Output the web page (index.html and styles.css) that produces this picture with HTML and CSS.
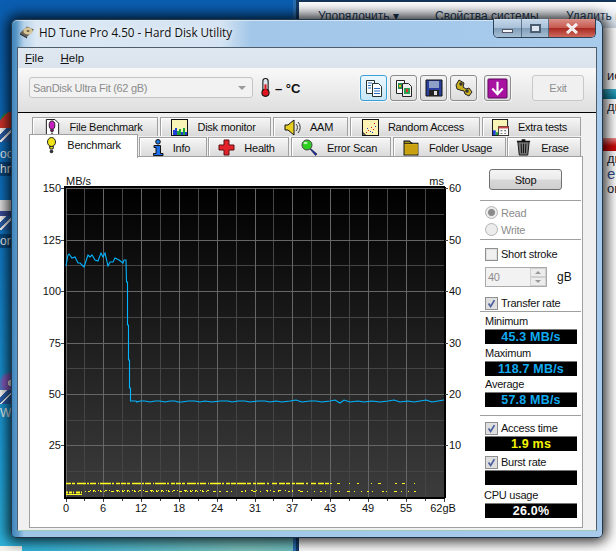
FILE: index.html
```html
<!DOCTYPE html>
<html lang="en">
<head>
<meta charset="utf-8">
<title>HD Tune Pro 4.50 - Hard Disk Utility</title>
<link rel="stylesheet" href="styles.css">
</head>
<body>
<div class="desk">
  <div class="shortcut s1"><span class="chrome"></span><span class="arrow"></span><span class="dlabel l1">oo</span><span class="dlabel dark l2">hr</span></div>
  <div class="shortcut s2"><span class="doc"></span><span class="arrow"></span><span class="dlabel dark l3">or</span></div>
  <div class="shortcut s3"><span class="purple"></span><span class="arrow"></span><span class="dlabel l4">Wil</span></div>
  <div class="corner"></div>

  <div class="explorer">
    <div class="exp-bar"><span class="e1">Упорядочить ▾</span><span class="e2">Свойства системы</span><span class="e3">Удалить и</span></div>
    <div class="exp-side">
      <p class="row-a">ис</p>
      <div class="bar teal"></div>
      <p class="row-b">дн</p>
      <div class="bar red"></div>
      <p class="row-c">дн</p>
      <p class="row-d">еМ</p>
      <p class="row-e">ов</p>
    </div>
  </div>

  <div class="win">
    <div class="titlebar">
      <svg class="appicon" viewBox="0 0 16 16"><path d="M1 9 8 2.500 15 5.500 8 13z" fill="#6b6255"/><ellipse cx="9" cy="7" rx="4.600" ry="3.600" fill="#d8c79a"/><ellipse cx="9" cy="7" rx="1.500" ry="1.100" fill="#6a5a3c"/><path d="M1 9 8 13 8 14.500 1 10.500z" fill="#2c2c2c"/></svg>
      <span class="title">HD Tune Pro 4.50 - Hard Disk Utility</span>
      <div class="caption">
        <span class="cbtn cmin"><i></i></span><span class="cbtn cmax"><i></i></span><span class="cbtn cclose">
          <svg viewBox="0 0 14 11" width="14" height="11"><path d="M2 1 12 10M12 1 2 10" stroke="#fff" stroke-width="3"/><path d="M2 1 12 10M12 1 2 10" stroke="#57373a" stroke-width=".5" opacity=".4"/></svg>
        </span>
      </div>
    </div>

    <div class="client">
      <div class="menu"><span><u>F</u>ile</span><span><u>H</u>elp</span></div>
      <div class="toolbar">
        <div class="combo"><span>SanDisk Ultra Fit (62 gB)</span><i></i></div>
        <svg class="thermo" viewBox="0 0 10 18"><rect x="2.500" y=".5" width="5" height="12" rx="2.500" fill="#dfe7ee" stroke="#111"/><circle cx="5" cy="14" r="3.400" fill="#e0141c" stroke="#111"/><rect x="4" y="6" width="2" height="7" fill="#e0141c"/></svg>
        <span class="temp">– °C</span>
        <button class="tool on"><svg viewBox="0 0 20 20"><path d="M2.500 2.500h8v13h-8z" fill="#fff" stroke="#233"/><path d="M8.500 5.500h6l3 3v10h-9z" fill="#fff" stroke="#233"/><path d="M4 5h4M4 7.500h3M4 10h3M10 10.500h6M10 13h6M10 15.500h6" stroke="#2a6fc0"/></svg></button>
        <button class="tool t2"><svg viewBox="0 0 20 20"><path d="M2.500 2.500h8v13h-8z" fill="#fff" stroke="#222"/><path d="M8.500 5.500h6l3 3v10h-9z" fill="#eee" stroke="#222"/><rect x="4" y="5" width="4" height="6" fill="#2a8a50"/><rect x="10" y="10" width="6" height="6" fill="#2aa050"/><rect x="12" y="11" width="2" height="3" fill="#e03030"/><rect x="5" y="7" width="2" height="2" fill="#e8c020"/></svg></button>
        <button class="tool t3"><svg viewBox="0 0 20 20"><path d="M2 2h16v16H2z" fill="#2a3f9c" stroke="#111"/><rect x="5" y="3" width="10" height="7" fill="#8fa0c8"/><rect x="5" y="12" width="10" height="6" fill="#222"/><rect x="10" y="13" width="3" height="4" fill="#ddd"/></svg></button>
        <button class="tool t4"><svg viewBox="0 0 20 20"><path d="M5 2l5 3-1 4 3 2 3-1 3 4-3 4-4-2-1-3-4-1-3-1-1-4z" fill="#c8b020" stroke="#222"/><circle cx="7" cy="6" r="1.800" fill="#333"/><circle cx="13" cy="13" r="1.800" fill="#333"/></svg></button>
        <button class="tool t5"><svg viewBox="0 0 22 22"><rect x="1" y="1" width="20" height="20" rx="1" fill="#a712a0" stroke="#5a085a"/><path d="M11 4v12M5.500 11 11 17l5.500-6" stroke="#fff" stroke-width="2.200" fill="none"/></svg></button>
        <button class="exit">Exit</button>
      </div>

      <div class="tabs">
        <div class="tabrow">
          <div class="tab w-fb"><svg viewBox="0 0 16 18" class="ico"><path d="M1.500.5h9l4 4v13h-13z" fill="#fff" stroke="#111"/><ellipse cx="7.500" cy="6.500" rx="3" ry="4.500" fill="#c81fc0" stroke="#222"/><path d="M6 11.500h3l-.5 2h-2z" fill="#c81fc0" stroke="#222"/><circle cx="7.500" cy="15.500" r="1" fill="#555"/></svg>File Benchmark</div>
          <div class="tab w-dm"><svg viewBox="0 0 17 17" class="ico"><rect x=".5" y=".5" width="16" height="16" fill="#f8f4b8" stroke="#111"/><path d="M2 16v-5h2V9h2v5h2v-4h2v3h2v-4h2v4h2v3z" fill="#1e3fd8"/><path d="M6 16v-4h2v-2h2v6zM12 16V9h2v7z" fill="#1da53a"/></svg>Disk monitor</div>
          <div class="tab w-aam"><svg viewBox="0 0 17 17" class="ico"><path d="M1 6h3l6-5v15l-6-5H1z" fill="#e8cf20" stroke="#111"/><path d="M12 5a5 5 0 0 1 0 7M14 3a8 8 0 0 1 0 11" stroke="#333" fill="none"/></svg>AAM</div>
          <div class="tab w-ra"><svg viewBox="0 0 17 17" class="ico"><rect x=".5" y=".5" width="16" height="16" fill="#fbf2b4" stroke="#111"/><path d="M12 4h1v1h-1zM9 8h1v1H9zM6 11h1v1H6zM11 10h1v1h-1zM4 13h1v1H4z" fill="#d01020"/><path d="M13 7h1v1h-1zM8 12h1v1H8zM5 9h1v1H5zM10 13h1v1h-1z" fill="#1a40c0"/><path d="M1 14h1v2h2v1" stroke="#111" fill="none"/></svg>Random Access</div>
          <div class="tab w-et"><svg viewBox="0 0 18 18" class="ico"><rect x=".5" y=".5" width="16" height="17" fill="#f8f4b8" stroke="#111"/><rect x="1" y="12" width="3" height="5" fill="#1e3fd8"/><rect x="4" y="14" width="3" height="3" fill="#1da53a"/><rect x="7" y="8" width="10.500" height="9.500" fill="#fff" stroke="#333"/><path d="M7 8h10.500v2H7z" fill="#c44"/><path d="M9 12h2v1H9zM13 12h2v1h-2zM9 15h2v1H9zM13 15h2v1h-2z" fill="#555"/></svg>Extra tests</div>
        </div>
        <div class="tabrow row2">
          <div class="tab sel w-bm"><svg viewBox="0 0 11 17" class="ico bang"><ellipse cx="5.500" cy="5" rx="4" ry="4.500" fill="#f0e418" stroke="#222"/><path d="M3.500 9.500h4L7 12H4z" fill="#f0e418" stroke="#222"/><circle cx="5.500" cy="14.500" r="1.800" fill="#333"/></svg>Benchmark</div>
          <div class="tab w-in"><svg viewBox="0 0 12 17" class="ico inf"><circle cx="6" cy="2.800" r="2.300" fill="#1f7ae8" stroke="#111"/><path d="M2 6.500h6.500v8H11v2H1.500v-2H4v-6H2z" fill="#1f6fe8" stroke="#111"/></svg>Info</div>
          <div class="tab w-he"><svg viewBox="0 0 17 17" class="ico"><path d="M6 1h5v5h5v5h-5v5H6v-5H1V6h5z" fill="#e4222a" stroke="#5a1010"/></svg>Health</div>
          <div class="tab w-es"><svg viewBox="0 0 17 17" class="ico"><path d="M9 9l7 6-1.500 1.500-6-7z" fill="#1c2fb8" stroke="#111" stroke-width=".6"/><circle cx="6" cy="6" r="5" fill="#2ed01f" stroke="#444"/><ellipse cx="4.500" cy="4" rx="2" ry="1.300" fill="#b8f4b0"/></svg>Error Scan</div>
          <div class="tab w-fu"><svg viewBox="0 0 16 16" class="ico"><path d="M1 4V2h5l2 2h6v11H1z" fill="#e8c820" stroke="#111"/><path d="M2 5h12v9H2z" fill="#c8a010"/><path d="M1 4h8" stroke="#111"/></svg>Folder Usage</div>
          <div class="tab w-er"><svg viewBox="0 0 16 18" class="ico"><path d="M2 3h12l-1.500 14h-9z" fill="#777" stroke="#111"/><path d="M1 2.500h14M6 1h4" stroke="#111" stroke-width="1.500"/><path d="M5.500 5l.5 10M8 5v10M10.500 5 10 15" stroke="#111"/></svg>Erase</div>
        </div>
        <div class="page">
          <svg class="chart" viewBox="30 169 446 351" width="446" height="351">
            <defs><linearGradient id="plotbg" x1="0" y1="0" x2="0" y2="1"><stop offset="0" stop-color="#000"/><stop offset="1" stop-color="#3c3c3c"/></linearGradient></defs>
            <rect x="66" y="188" width="378" height="309" fill="url(#plotbg)"/>
            <path class="minor" d="M84.500 188v309M122.500 188v309M160.500 188v309M198.500 188v309M236.500 188v309M273.500 188v309M311.500 188v309M349.500 188v309M387.500 188v309M425.500 188v309M66 214.500h378M66 265.500h378M66 317.500h378M66 368.500h378M66 420.500h378M66 471.500h378"/>
            <path class="major" d="M66.500 188v309M103.500 188v309M141.500 188v309M179.500 188v309M217.500 188v309M255.500 188v309M292.500 188v309M330.500 188v309M368.500 188v309M406.500 188v309M66 188.500h378M66 240.500h378M66 291.500h378M66 343.500h378M66 394.500h378M66 445.500h378"/>
            <path class="frame" d="M65 187v311h380M64 187h381M445 187v311" />
            <path class="tick" d="M61 188.500h3M61 240.500h3M61 291.500h3M61 343.500h3M61 394.500h3M61 445.500h3M445 188.500h3M445 240.500h3M445 291.500h3M445 343.500h3M445 394.500h3M445 445.500h3M66.500 499v3M84.500 499v2M103.500 499v3M122.500 499v2M141.500 499v3M160.500 499v2M179.500 499v3M198.500 499v2M217.500 499v3M236.500 499v2M255.500 499v3M273.500 499v2M292.500 499v3M311.500 499v2M330.500 499v3M349.500 499v2M368.500 499v3M387.500 499v2M406.500 499v3M425.500 499v2M444.500 499v3"/>
            <line class="dots d1" x1="66" y1="483.500" x2="240" y2="483.500"/>
            <line class="dots d2" x1="240" y1="483.500" x2="330" y2="483.500"/>
            <line class="dots d3" x1="330" y1="483.500" x2="422" y2="483.500"/>
            <line class="dots d4" x1="85" y1="491.500" x2="220" y2="491.500"/>
            <line class="dots d5" x1="220" y1="491.500" x2="418" y2="491.500"/>
            <line class="dots d6" x1="66" y1="494.500" x2="83" y2="494.500"/>
            <line class="dots d7" x1="66" y1="492.500" x2="82" y2="492.500"/>
            <line class="dots d4" x1="90" y1="490.500" x2="210" y2="490.500"/>
            <line class="dots d5" x1="245" y1="490.500" x2="300" y2="490.500"/>
            <polyline class="trace" points="66,266 68,255 69,254 72,258 75,257 78,263 80,263 84,267 88,255 90,257 92,255 95,260 98,261 101,253 103,257 105,253 108,266 110,262 113,262 115,258 119,260 123,263 124,260 126,260 126.500,282 127.500,282 127.500,325 128.500,325 128.500,360 129.500,360 129.500,388 130.500,388 130.500,401 136,401 137,402 140,401 145,401 150,402 155,401 160,401 165,402 170,401 175,401 178,402 182,402 188,401 195,401 200,402 205,401 212,402 220,401 228,401 232,402 238,401 245,401 250,402 258,401 265,401 270,402 276,401 282,402 290,401 296,400 302,402 310,401 316,401 322,402 330,401 335,400 340,403 344,400 350,402 358,401 364,402 372,401 380,402 388,401 394,400 400,402 408,401 414,402 420,401 426,400 432,402 438,401 444,400"/>
            <g class="lbl end">
              <text x="61" y="192">150</text><text x="61" y="244">125</text><text x="61" y="295">100</text><text x="61" y="347">75</text><text x="61" y="398">50</text><text x="61" y="449">25</text>
            </g>
            <g class="lbl">
              <text x="66" y="185">MB/s</text>
              <text x="449" y="192">60</text><text x="449" y="244">50</text><text x="449" y="295">40</text><text x="449" y="347">30</text><text x="449" y="398">20</text><text x="449" y="449">10</text>
            </g>
            <text class="lbl end" x="444" y="185">ms</text>
            <g class="lbl mid">
              <text x="66" y="512">0</text><text x="103" y="512">6</text><text x="141" y="512">12</text><text x="179" y="512">18</text><text x="217" y="512">24</text><text x="255" y="512">31</text><text x="292" y="512">37</text><text x="330" y="512">43</text><text x="368" y="512">49</text><text x="406" y="512">55</text><text x="443" y="512">62gB</text>
            </g>
          </svg>
          <div class="panel">
            <button class="stop">Stop</button>
            <hr class="sep s-a">
            <label class="opt dim first"><i class="radio on"></i>Read</label>
            <label class="opt dim"><i class="radio"></i>Write</label>
            <hr class="sep s-b">
            <label class="opt short"><i class="check"></i>Short stroke</label>
            <div class="spinrow"><div class="spin"><span>40</span><b><i class="up"></i><i class="down"></i></b></div><span class="unit">gB</span></div>
            <label class="opt tr"><i class="check ticked"><svg viewBox="0 0 13 13"><path d="M3 6.500 5.500 10 10 2.500" stroke="#4b5f9e" stroke-width="2" fill="none"/></svg></i>Transfer rate</label>
            <hr class="sep s-c">
            <div class="cap">Minimum</div><div class="val blue">45.3 MB/s</div>
            <div class="cap c2">Maximum</div><div class="val blue">118.7 MB/s</div>
            <div class="cap c3">Average</div><div class="val blue">57.8 MB/s</div>
            <hr class="sep s-d">
            <label class="opt at"><i class="check ticked"><svg viewBox="0 0 13 13"><path d="M3 6.500 5.500 10 10 2.500" stroke="#4b5f9e" stroke-width="2" fill="none"/></svg></i>Access time</label>
            <div class="val yellow">1.9 ms</div>
            <label class="opt br"><i class="check ticked"><svg viewBox="0 0 13 13"><path d="M3 6.500 5.500 10 10 2.500" stroke="#4b5f9e" stroke-width="2" fill="none"/></svg></i>Burst rate</label>
            <div class="val"></div>
            <div class="cap c4">CPU usage</div><div class="val white">26.0%</div>
          </div>
        </div>
      </div>
    </div>
  </div>
</div>
</body>
</html>
```
FILE: styles.css
```css
* { box-sizing: border-box; }
html, body { margin: 0; padding: 0; }
body { width: 616px; height: 551px; overflow: hidden; font-family: "Liberation Sans", Arial, sans-serif; font-size: 11px; letter-spacing: -.25px; color: #111; }

.desk { position: relative; width: 616px; height: 551px; overflow: hidden;
  background:
    radial-gradient(ellipse 230px 70px at 250px 551px, #7fc4bd 0, rgba(127,196,189,0) 100%),
    linear-gradient(180deg, #0a5db0 0, #0f78c8 40%, #1fa6e0 85%, #2fb4dc 100%); }

.shortcut { position: absolute; left: 0; width: 11px; display: flex; flex-direction: column; overflow: hidden; color: #fff; font-size: 12px; letter-spacing: 0; }
.s1 { top: 112px; }
.s2 { top: 200px; }
.s3 { top: 372px; }
.chrome { display: block; width: 11px; height: 16px; background: linear-gradient(135deg, #2f8a3c 0 30%, #d6352b 30% 100%); border-radius: 10px 0 0 0; }
.doc { display: block; width: 11px; height: 16px; background: linear-gradient(180deg, #e7e7e7 0 70%, #3a4f9c 70%); }
.purple { display: block; width: 11px; height: 18px; background: radial-gradient(circle at 11px 11px, #fff 0 3px, #8a60c8 3px 9px, #5a78c8 9px); border-radius: 10px 0 0 0; }
.arrow { display: block; width: 11px; height: 14px; background: linear-gradient(135deg, #fff 0 28%, #2c62b0 28% 52%, #fff 52% 62%, #2c62b0 62% 100%); }
.dlabel { display: block; height: 14px; line-height: 14px; white-space: nowrap; }
.dlabel.dark { background: rgba(0,20,50,.45); }
.l1 { margin-top: 5px; }
.l2 { margin-top: 1px; }
.l3 { margin-top: 4px; }
.l4 { margin-top: 2px; }
.corner { position: absolute; left: 0; bottom: 0; width: 22px; height: 5px; background: #f4f4ee; }

.explorer { position: absolute; left: 296px; top: 0; width: 320px; height: 551px; background: #fff; border-left: 3px solid #123a66; border-top: 2px solid #14345a; box-shadow: -3px 0 0 #2a6eb0; letter-spacing: 0; }
.exp-bar { position: relative; height: 26px; display: flex; background: linear-gradient(180deg, #fdfeff 0, #f0f4f9 45%, #c9d4e0 100%); color: #1e395b; font-size: 12px; padding-top: 7px; }
.e1, .e2, .e3 { position: absolute; top: 7px; white-space: nowrap; }
.e1 { left: 19px; }
.e2 { left: 136px; }
.e3 { left: 267px; white-space: nowrap; }
.exp-side { margin-left: 308px; padding-top: 40px; white-space: nowrap; color: #223; font-size: 13px; }
.exp-side p { margin: 0; height: 15px; line-height: 15px; }
.bar { margin-left: -10px; width: 30px; }
.teal { margin-top: 6px; height: 10px; background: linear-gradient(180deg, #3aa9c6, #0a7c98); }
.row-b { margin-top: 4px; }
.red { margin-top: 24px; height: 13px; background: linear-gradient(180deg, #ee9090 0, #cc0a0a 60%); }
.row-c { margin-top: 4px; }
.row-d { margin-top: 13px; font-size: 15px; color: #35508a; }
.row-e { margin-top: 25px; }

.win { position: absolute; left: 11px; top: 19px; width: 592px; height: 519px; display: flex; flex-direction: column; padding: 0 5px 6px; border-radius: 6px 8px 5px 5px; border: 1px solid #24384c; border-bottom-color: #1c3042;
  background: linear-gradient(90deg, #3f86bd 0, #5f9bc9 6px, #9ec4e6 12px, #a8cbec 100%);
  box-shadow: 0 0 13px 4px rgba(0,0,0,.8), inset 0 1px 0 rgba(255,255,255,.5); }
.titlebar { flex: none; height: 27px; padding-bottom: 3px; display: flex; align-items: center; position: relative; background: linear-gradient(90deg, transparent 0, rgba(230,238,246,.85) 20px, rgba(226,235,245,.8) 205px, transparent 235px); margin: 0 -1px; }
.appicon { width: 16px; height: 16px; margin-left: 3px; margin-right: 4px; }
.title { font-family: "Open Sans", "Liberation Sans", sans-serif; font-size: 11.700px; letter-spacing: 0; color: #111; white-space: nowrap; text-shadow: 0 0 6px #fff; }
.caption { position: absolute; right: 2px; top: -1px; display: flex; height: 19px; border: 1px solid #2c4257; border-top: 0; border-radius: 0 0 5px 5px; overflow: hidden; }
.cbtn { display: flex; align-items: center; justify-content: center; height: 18px; border-right: 1px solid rgba(40,60,80,.6); background: linear-gradient(180deg, #c6d8ea 0, #a9c1d9 48%, #7f9cb7 50%, #a5bed4 100%); }
.cmin { width: 28px; }
.cmin i { display: block; width: 11px; height: 4px; margin-top: 6px; background: #f2f6fa; border: 1px solid #556; }
.cmax { width: 27px; }
.cmax i { display: block; width: 11px; height: 9px; background: #dfe8f0; border: 2px solid #4c5f72; }
.cclose { width: 46px; border-right: 0; background: linear-gradient(180deg, #d99088 0, #c85a50 48%, #a82a22 52%, #cf6a5c 100%); }

.client { flex: 1; display: flex; flex-direction: column; background: #f0f0f0; border: 1px solid #4e5d6b; border-bottom-color: #9cb; min-height: 0; }
.menu { flex: none; height: 20px; background: linear-gradient(180deg, #dfe8f1, #dbe3ec); display: flex; gap: 17px; align-items: center; padding-left: 7px; font-size: 11.500px; letter-spacing: 0; color: #111; }
.toolbar { flex: none; height: 45px; display: flex; align-items: flex-start; padding: 7px 0 0 11px; background: linear-gradient(180deg, #f9f9f9 0, #dedede 100%); border-bottom: 1px solid #000; }
.combo { width: 224px; height: 21px; margin-top: 2px; border: 1px solid #c4c4c4; border-radius: 3px; background: #f2f2f2; color: #8c8c8c; font-size: 11px; letter-spacing: -.3px; display: flex; align-items: center; justify-content: space-between; padding: 0 6px 0 3px; }
.combo i { width: 0; height: 0; border: 4px solid transparent; border-top: 4px solid #9a9a9a; border-bottom: 0; }
.thermo { width: 11px; height: 19px; margin: 3px 0 0 7px; flex: none; }
.temp { width: 85px; margin: 6px 0 0 4px; font-size: 13px; font-weight: bold; letter-spacing: 0; color: #111; white-space: nowrap; }
.tool { width: 27px; height: 26px; margin-right: 3px; padding: 0; display: flex; align-items: center; justify-content: center; border: 1px solid #8c8c8c; border-radius: 3px; background: linear-gradient(180deg, #f4f4f4, #dcdcdc); box-shadow: 0 0 0 1px #f6f6f6; }
.tool svg { width: 20px; height: 20px; }
.tool.on { border-color: #3ca0d8; background: linear-gradient(180deg, #ecf7fd, #c5e6f7); }
.tool.t5 { margin-left: 4px; margin-right: 21px; }
.tool.t5 svg { width: 21px; height: 21px; }
.exit { width: 52px; height: 26px; padding: 0; border: 1px solid #c8c8c8; border-radius: 3px; background: #f0f0f0; color: #8f8f8f; font: 11px "Liberation Sans", sans-serif; letter-spacing: -.25px; }

.tabs { flex: 1; display: flex; flex-direction: column; padding: 4px 13px 2px 11px; min-height: 0; }
.tabrow { flex: none; display: flex; gap: 2px; padding-left: 3px; height: 20px; position: relative; }
.tab { height: 19px; flex: none; display: flex; align-items: center; justify-content: center; gap: 9px; padding-right: 4px; border: 1px solid #a0a0a0; border-bottom: 0; background: linear-gradient(180deg, #f6f6f6 0, #e6e6e6 55%, #d9d9d9 100%); color: #111; white-space: nowrap; box-shadow: inset 1px 1px 0 #fff; }
.row2 { padding-left: 0; gap: 1px; height: 20px; }
.row2 .tab { height: 20px; }
.row2 .w-he, .row2 .w-es { margin-right: 1px; }
.ico { width: 17px; height: 17px; flex: none; }
.bang { width: 11px; height: 17px; margin-top: -2px; }
.inf { width: 12px; height: 17px; }
.w-fb { width: 126px; } .w-dm { width: 111px; } .w-aam { width: 75px; } .w-ra { width: 130px; } .w-et { width: 99px; }
.w-bm { width: 109px; } .w-in { width: 68px; } .w-he { width: 81px; } .w-es { width: 100px; } .w-fu { width: 113px; } .w-er { width: 74px; }
.sel { position: relative; z-index: 2; align-self: flex-start; margin-top: -3px; height: 24px !important; background: #fff; box-shadow: none; align-items: flex-start; padding: 4px 0 0; gap: 10px; border-color: #a0a0a0; }
.page { flex: 1; display: flex; position: relative; background: #fff; border: 1px solid #a0a0a0; margin-top: -1px; min-height: 0; }
.chart { flex: none; margin-top: 12px; display: block; }
.minor { stroke: #454545; fill: none; }
.major { stroke: #666; fill: none; }
.frame { stroke: #000; stroke-width: 2; fill: none; }
.tick { stroke: #444; fill: none; }
.trace { fill: none; stroke: #00b4ff; stroke-width: 1.100; }
.dots { stroke: #ffff20; stroke-width: 1; fill: none; }
.d1 { stroke-width: 1.500; stroke-dasharray: 5 1 3 2 9 1 2 1 6 2 1 1 11 1 2 2 4 1; }
.d2 { stroke-width: 1.500; stroke-dasharray: 6 1 4 2 3 1 8 2 2 3 5 2; }
.d3 { stroke-dasharray: 2 5 3 9 1 7 2 12 1 6 3 14; }
.d4 { stroke-dasharray: 1 2 2 3 1 1 1 4 2 2 1 6 3 3 1 1; }
.d5 { stroke-dasharray: 1 5 2 3 1 9 2 2 1 7 3 4 1 6; }
.d6 { stroke-dasharray: 16 1; }
.d7 { stroke-width: 2; stroke-dasharray: 2 1 3 1 1 2 4 1; }
.lbl text, text.lbl { font-family: "Liberation Sans", sans-serif; font-size: 11px; letter-spacing: 0; fill: #111; }
.end text, text.end { text-anchor: end; }
.mid text { text-anchor: middle; }

.panel { flex: none; width: 101px; display: flex; flex-direction: column; padding-top: 12px; margin-left: 4px; }
.stop { width: 73px; height: 21px; margin-left: 9px; padding: 0; flex: none; border: 1px solid #707070; border-radius: 3px; background: linear-gradient(180deg, #f4f4f4 0, #ebebeb 48%, #d8d8d8 52%, #cfcfcf 100%); font: 11px "Liberation Sans", sans-serif; letter-spacing: -.25px; color: #111; }
.sep { flex: none; width: 101px; height: 1px; margin: 0; border: 0; background: #a0a0a0; }
.s-a { margin-top: 10px; }
.s-b { margin-top: 1px; }
.s-c { margin-top: 0; }
.s-d { margin-top: 8px; }
.opt { flex: none; display: flex; align-items: center; gap: 3px; height: 17px; padding-left: 5px; white-space: nowrap; color: #111; }
.opt.dim { color: #8d8d8d; }
.first { margin-top: 3px; }
.short { margin-top: 6px; height: 16px; }
.tr { margin-top: 8px; height: 16px; }
.at { margin-top: 4px; height: 16px; }
.br { margin-top: 3px; height: 16px; }
.radio { flex: none; width: 13px; height: 13px; border-radius: 50%; border: 1px solid #b4b4b4; background: #ececec; }
.radio.on { background: radial-gradient(circle, #8a8a8a 0 3px, #eaeaea 4px); }
.check { flex: none; width: 13px; height: 13px; border: 1px solid #8e8f8f; background: #f0f0f0; display: block; box-shadow: inset 0 0 0 1px #e0e0e0; }
.check svg { display: block; width: 11px; height: 11px; }
.ticked { background: #dedede; }
.spinrow { flex: none; display: flex; align-items: center; margin: 5px 0 0 5px; height: 20px; }
.spin { width: 62px; height: 20px; border: 1px solid #aaa; background: #f2f2f2; display: flex; justify-content: space-between; color: #8d8d8d; padding-left: 2px; line-height: 18px; }
.spin b { width: 16px; display: flex; flex-direction: column; }
.spin i { flex: 1; background: #ececec; border: 1px solid #d0d0d0; position: relative; display: flex; align-items: center; justify-content: center; }
.up::before { content: ""; border: 3px solid transparent; border-bottom: 3px solid #999; border-top: 0; }
.down::before { content: ""; border: 3px solid transparent; border-top: 3px solid #999; border-bottom: 0; }
.unit { margin-left: 10px; font-size: 12px; letter-spacing: 0; }
.cap { flex: none; height: 15px; line-height: 15px; margin-top: 2px; padding-left: 5px; white-space: nowrap; }
.c2 { margin-top: 2px; }
.c3 { margin-top: 1px; }
.c4 { margin-top: 3px; padding-left: 4px; }
.val { flex: none; width: 92px; height: 15px; margin-left: 5px; background: #000; border-top: 1px solid #777; text-align: center; font: bold 12.500px/14px "Liberation Sans", sans-serif; letter-spacing: .2px; }
.blue { color: #10aaf0; }
.yellow { color: #f4f400; }
.white { color: #fff; }
```
